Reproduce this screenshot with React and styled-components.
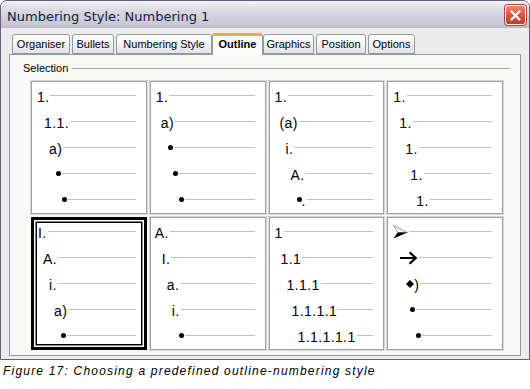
import React from 'react';
import styled, { createGlobalStyle } from 'styled-components';

const GlobalStyle = createGlobalStyle`
    body {
        margin: 0;
        background: #ffffff;
        font-family: "Liberation Sans", Arial, sans-serif;
    }
`;

const Window = styled.div`
    width: 530px;
    box-sizing: border-box;
    border: 1px solid #62627e;
    border-radius: 7px 7px 0 0;
    background: #ececec;
    overflow: hidden;
`;

const TitleBar = styled.div`
    height: 27px;
    display: flex;
    justify-content: space-between;
    align-items: flex-start;
    padding: 0 3px 0 6px;
    background: linear-gradient(to bottom, #f2f2f6 0%, #dadae4 35%, #cacad8 80%, #bdbdcc 100%);
`;

const TitleText = styled.div`
    padding-top: 8px;
    font-family: "DejaVu Sans", Verdana, sans-serif;
    font-size: 13px;
    line-height: 15px;
    color: #141a40;
`;

const CloseButton = styled.div`
    margin-top: 4px;
    width: 21px;
    height: 20px;
    box-sizing: border-box;
    border: 1px solid #f4f0f0;
    border-radius: 3px;
    background: linear-gradient(to bottom, #ec8c74 0%, #d8583c 50%, #c0402a 100%);
    display: flex;
    align-items: center;
    justify-content: center;
    box-shadow: 0 0 0 1px #a84a3a;
`;

const Client = styled.div`
    padding: 6px 8px 3px 8px;
`;

const TabRow = styled.div`
    display: flex;
    align-items: flex-end;
    gap: 2px;
    height: 20px;
    padding-left: 3px;
    position: relative;
    z-index: 1;
`;

const Tab = styled.div`
    width: ${p => p.$width}px;
    height: ${p => (p.$active ? 22 : 20)}px;
    margin: ${p => (p.$active ? '0 -2px -1px' : '0')};
    box-sizing: border-box;
    display: flex;
    align-items: center;
    justify-content: center;
    padding-bottom: ${p => (p.$active ? 2 : 0)}px;
    border: 1px solid #919b9c;
    border-bottom: ${p => (p.$active ? 'none' : '1px solid #919b9c')};
    border-top: ${p => (p.$active ? '3px solid #f2a93b' : '1px solid #919b9c')};
    border-radius: 3px 3px 0 0;
    background: ${p => (p.$active
        ? '#fcfcfc'
        : 'linear-gradient(to bottom, #ffffff 0%, #f4f4f6 50%, #e2e2ea 100%)')};
    font-size: 11px;
    line-height: 13px;
    font-weight: ${p => (p.$active ? 'bold' : 'normal')};
    color: #000;
    position: relative;
    z-index: ${p => (p.$active ? 2 : 1)};
`;

const Panel = styled.div`
    border: 1px solid #919b9c;
    background: #f8f8f6;
    padding: 7px 10px 5px 13px;
`;

const SectionHeader = styled.div`
    display: flex;
    align-items: center;
    height: 13px;
`;

const SectionLabel = styled.span`
    font-size: 11px;
    line-height: 13px;
    color: #000;
    padding-right: 4px;
`;

const SectionRule = styled.div`
    flex: 1;
    height: 1px;
    background: #a4a4b0;
`;

const StyleGrid = styled.div`
    display: grid;
    grid-template-columns: repeat(4, 1fr);
    grid-template-rows: 133px 133px;
    gap: 3px;
    margin: 6px 7px 0 8px;
`;

const StyleCell = styled.div`
    box-sizing: border-box;
    background: #ffffff;
    border: ${p => (p.$selected ? '3px solid #000' : '1px solid #a2a2a2')};
    box-shadow: ${p => (p.$selected
        ? 'inset 0 0 0 1.5px #fff, inset 0 0 0 3px #000'
        : '0 0 0 1px #d6d6d6')};
    padding: ${p => (p.$selected ? '0 8px 0 0' : '2px 10px 0 0')};
`;

const Level = styled.div`
    display: flex;
    align-items: center;
    height: 26px;
    padding-left: ${p => p.$indent}px;
`;

const Label = styled.span`
    font-size: 14px;
    line-height: 16px;
    letter-spacing: 0.4px;
    color: #000;
    white-space: nowrap;
`;

const Rule = styled.div`
    flex: 1;
    height: 1px;
    margin: 0 0 3px 1px;
    background: #c0c0c0;
`;

const Dot = styled.span`
    width: 5px;
    height: 5px;
    border-radius: 50%;
    background: #000;
    margin-bottom: 3px;
    flex: none;
`;

const Glyph = styled.svg`
    flex: none;
    margin-bottom: ${p => p.$lift || 0}px;
`;

const Caption = styled.div`
    margin: 4px 0 0 3px;
    font-size: 12px;
    line-height: 14px;
    font-style: italic;
    letter-spacing: 1.2px;
    color: #000;
`;

const Arrowhead = () => (
    <Glyph width="15" height="14" viewBox="0 0 15 14" $lift={3}>
        <polygon points="0.5,0.5 14.5,7.5 5,7.5" fill="#fff" stroke="#7088b0" strokeWidth="0.8" />
        <polygon points="4.5,7.5 14.5,7.5 0.5,13.5" fill="#000" />
    </Glyph>
);

const Arrow = () => (
    <Glyph width="19" height="14" viewBox="0 0 19 14" $lift={3}>
        <path d="M1 7 H16.5 M10.5 1.2 L16.8 7 L10.5 12.8" fill="none" stroke="#000" strokeWidth="2.2" />
    </Glyph>
);

const Diamond = () => (
    <Glyph width="8" height="8" viewBox="0 0 8 8" $lift={3}>
        <polygon points="4,0 8,4 4,8 0,4" fill="#000" />
    </Glyph>
);

const tabs = [
    { name: 'Organiser', width: 58 },
    { name: 'Bullets', width: 42 },
    { name: 'Numbering Style', width: 96 },
    { name: 'Outline', width: 51, active: true },
    { name: 'Graphics', width: 51 },
    { name: 'Position', width: 50 },
    { name: 'Options', width: 47 },
];

// indent is measured from the cell's inner edge
const presets = [
    [[5, '1.'], [12, '1.1.'], [17, 'a)'], [24, 'dot'], [30, 'dot']],
    [[5, '1.'], [10, 'a)'], [17, 'dot'], [22, 'dot'], [28, 'dot']],
    [[5, '1.'], [10, '(a)'], [16, 'i.'], [21, 'A.'], [27, 'dot.']],
    [[5, '1.'], [11, '1.'], [17, '1.'], [22, '1.'], [28, '1.']],
    [[4, 'I.'], [9, 'A.'], [15, 'i.'], [20, 'a)'], [27, 'dot']],
    [[4, 'A.'], [11, 'I.'], [16, 'a.'], [21, 'i.'], [28, 'dot']],
    [[5, '1'], [11, '1.1'], [17, '1.1.1'], [22, '1.1.1.1'], [28, '1.1.1.1.1']],
    [[5, 'head'], [11, 'arrow'], [18, 'diamond'], [22, 'dot'], [28, 'dot']],
];

function Marker({ kind }) {
    if (kind === 'dot') return <Dot />;
    if (kind === 'dot.') return <><Dot /><Label>.</Label></>;
    if (kind === 'head') return <Arrowhead />;
    if (kind === 'arrow') return <Arrow />;
    if (kind === 'diamond') return <><Diamond /><Label>)</Label></>;
    return <Label>{kind}</Label>;
}

function App() {
    return (
        <>
            <GlobalStyle />
            <Window>
                <TitleBar>
                    <TitleText>Numbering Style: Numbering 1</TitleText>
                    <CloseButton>
                        <svg width="11" height="11" viewBox="0 0 11 11">
                            <path d="M1.5 1.5 L9.5 9.5 M9.5 1.5 L1.5 9.5" stroke="#fff" strokeWidth="2.2" strokeLinecap="round" />
                        </svg>
                    </CloseButton>
                </TitleBar>
                <Client>
                    <TabRow>
                        {tabs.map(t => (
                            <Tab key={t.name} $width={t.width} $active={t.active}>{t.name}</Tab>
                        ))}
                    </TabRow>
                    <Panel>
                        <SectionHeader>
                            <SectionLabel>Selection</SectionLabel>
                            <SectionRule />
                        </SectionHeader>
                        <StyleGrid>
                            {presets.map((levels, i) => (
                                <StyleCell key={i} $selected={i === 4}>
                                    {levels.map(([indent, kind], j) => (
                                        <Level key={j} $indent={indent}>
                                            <Marker kind={kind} />
                                            <Rule />
                                        </Level>
                                    ))}
                                </StyleCell>
                            ))}
                        </StyleGrid>
                    </Panel>
                </Client>
            </Window>
            <Caption>Figure 17: Choosing a predefined outline-numbering style</Caption>
        </>
    );
}

export default App;
